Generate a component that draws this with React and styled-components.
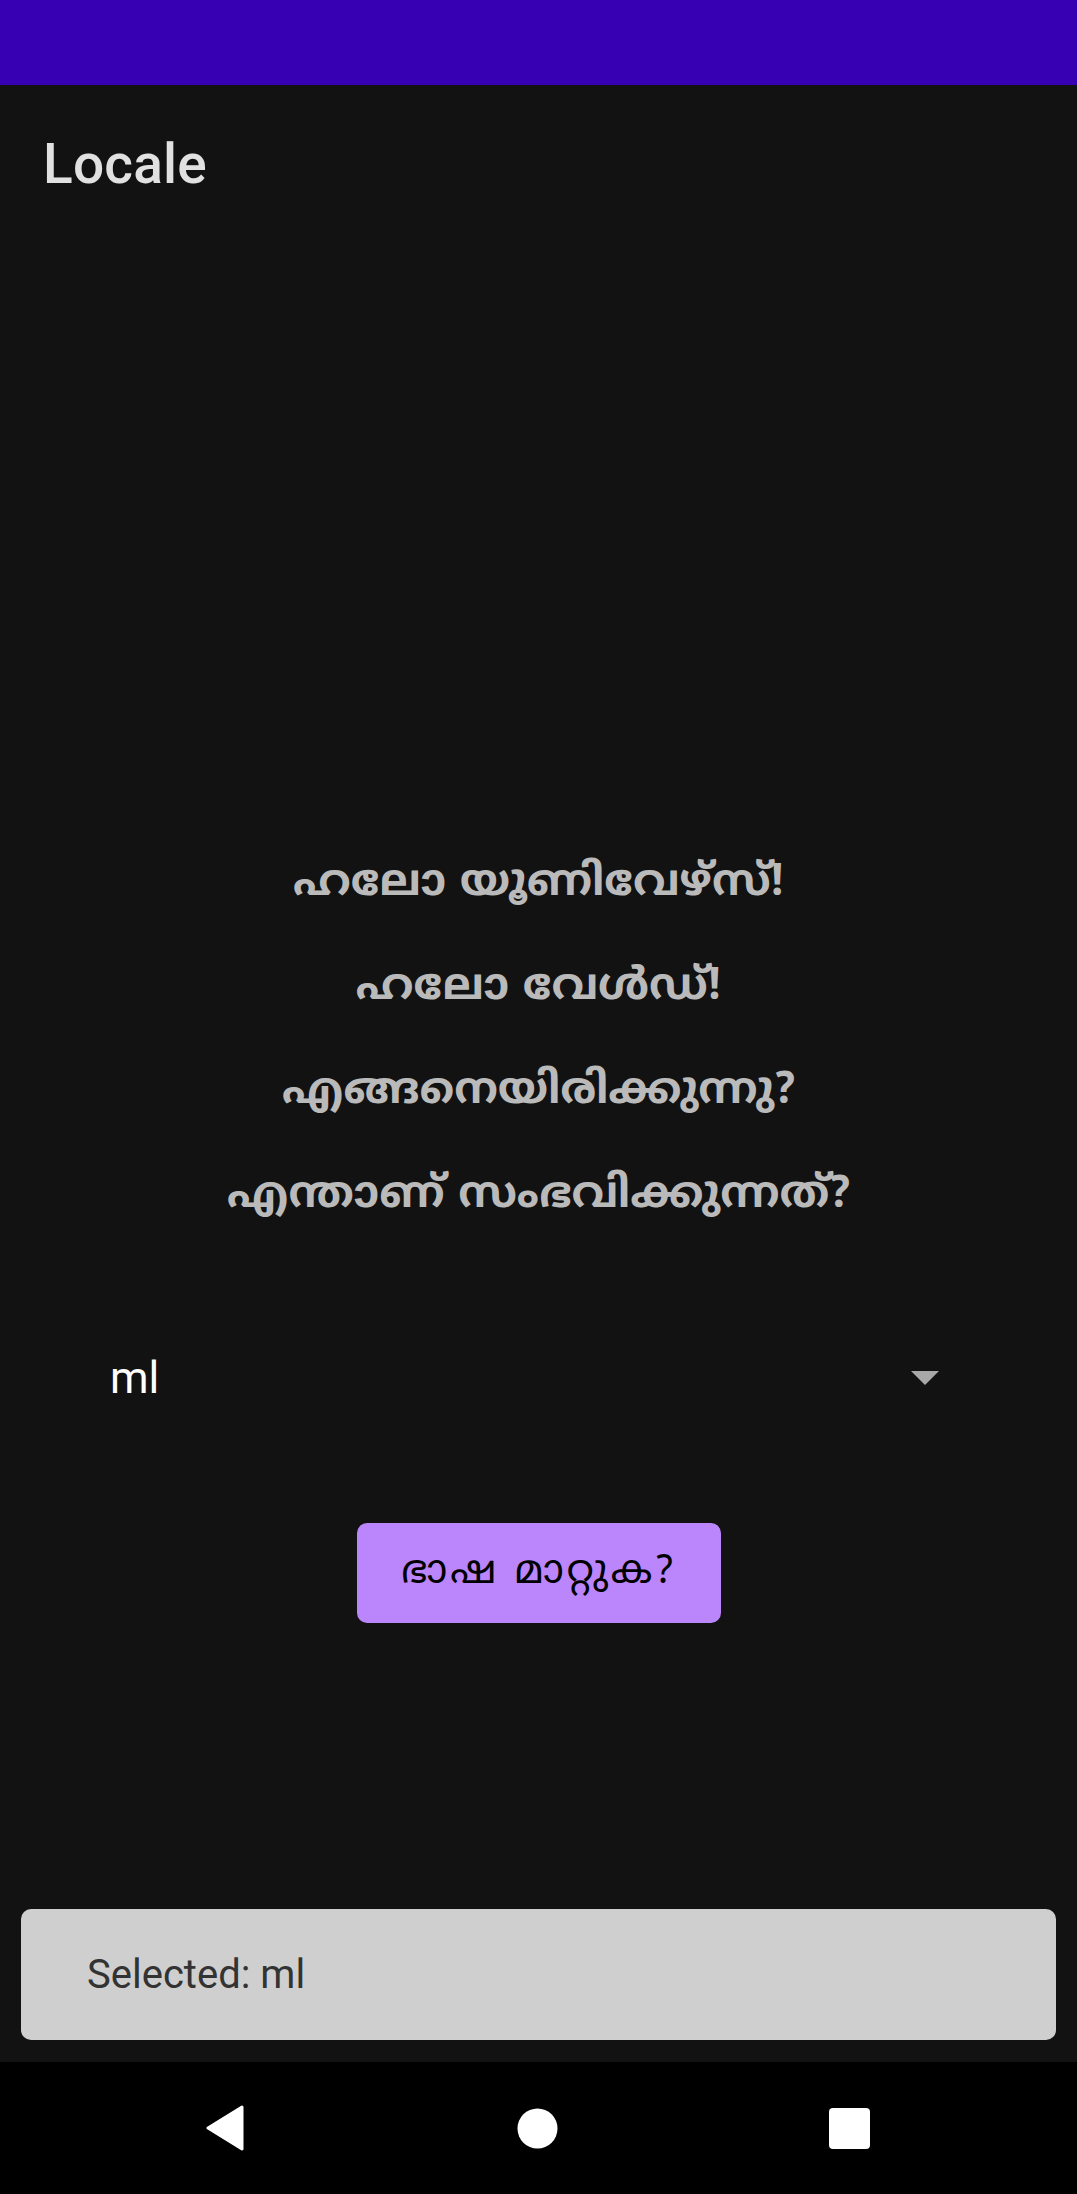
import React from "react";
import styled, { createGlobalStyle } from "styled-components";

const Global = createGlobalStyle`
  html, body { margin: 0; padding: 0; background: #121212; }
  * { box-sizing: border-box; }
`;

const Screen = styled.div`
  width: 1077px;
  height: 2194px;
  display: flex;
  flex-direction: column;
  background: #121212;
  font-family: Roboto, "Noto Sans", sans-serif;
  overflow: hidden;
`;

const StatusBar = styled.div`
  height: 85px;
  flex: none;
  background: #3700b3;
`;

const AppBar = styled.header`
  height: 154px;
  flex: none;
  display: flex;
  align-items: center;
  padding-left: 43px;
  padding-top: 4px;
`;

const Title = styled.h1`
  margin: 0;
  font-family: Roboto, sans-serif;
  font-weight: 500;
  font-size: 55px;
  color: #e1e1e1;
  letter-spacing: 0.2px;
`;

const Content = styled.main`
  flex: 1;
  display: flex;
  flex-direction: column;
  align-items: center;
  padding-top: 594px;
`;

const Greeting = styled.p`
  margin: 0;
  height: 104px;
  line-height: 104px;
  text-align: center;
  font-family: "Noto Sans Malayalam", "Noto Sans", sans-serif;
  font-weight: 700;
  font-size: 44px;
  color: #bababa;
`;

const SpinnerRow = styled.div`
  align-self: stretch;
  margin: 63px 0 0;
  height: 132px;
  display: flex;
  align-items: center;
  justify-content: space-between;
  padding: 0 138px 0 110px;
`;

const SpinnerValue = styled.span`
  font-family: Roboto, sans-serif;
  font-size: 44px;
  color: #ffffff;
`;

const Caret = styled.span`
  width: 0;
  height: 0;
  border-left: 14px solid transparent;
  border-right: 14px solid transparent;
  border-top: 14px solid #a8a8a8;
`;

const Button = styled.button`
  margin-top: 79px;
  width: 364px;
  height: 100px;
  border: none;
  border-radius: 10px;
  background: #bb86fc;
  color: #000;
  font-family: "Noto Sans Malayalam", "Noto Sans", sans-serif;
  font-size: 40px;
  font-weight: 400;
  letter-spacing: 3px;
  display: flex;
  align-items: center;
  justify-content: center;
  padding: 0;
`;

const Spacer = styled.div`
  flex: 1;
`;

const Snackbar = styled.div`
  margin: 0 21px 22px 21px;
  height: 131px;
  flex: none;
  border-radius: 10px;
  background: #cfcfcf;
  display: flex;
  align-items: center;
  padding-left: 66px;
  font-family: Roboto, sans-serif;
  font-size: 40px;
  color: #333333;
`;

const NavBar = styled.nav`
  height: 132px;
  flex: none;
  background: #000;
  display: flex;
  align-items: center;
  justify-content: space-between;
  padding: 0 207px 0 205px;
`;

const NavIcon = styled.svg`
  display: block;
`;

export default function App() {
  return (
    <>
      <Global />
      <Screen>
        <StatusBar />
        <AppBar>
          <Title>Locale</Title>
        </AppBar>
        <Content>
          <Greeting>ഹലോ യൂണിവേഴ്സ്!</Greeting>
          <Greeting>ഹലോ വേൾഡ്!</Greeting>
          <Greeting>എങ്ങനെയിരിക്കുന്നു?</Greeting>
          <Greeting>എന്താണ് സംഭവിക്കുന്നത്?</Greeting>
          <SpinnerRow>
            <SpinnerValue>ml</SpinnerValue>
            <Caret />
          </SpinnerRow>
          <Button>ഭാഷ മാറ്റുക?</Button>
          <Spacer />
        </Content>
        <Snackbar>Selected: ml</Snackbar>
        <NavBar>
          <NavIcon width="40" height="46" viewBox="0 0 40 46">
            <path d="M37 2 L3 23 L37 44 Z" fill="#fff" stroke="#fff" strokeWidth="3" strokeLinejoin="round" />
          </NavIcon>
          <NavIcon width="41" height="41" viewBox="0 0 41 41">
            <circle cx="20.5" cy="20.5" r="20" fill="#fff" />
          </NavIcon>
          <NavIcon width="41" height="41" viewBox="0 0 41 41">
            <rect x="0" y="0" width="41" height="41" rx="4" fill="#fff" />
          </NavIcon>
        </NavBar>
      </Screen>
    </>
  );
}
